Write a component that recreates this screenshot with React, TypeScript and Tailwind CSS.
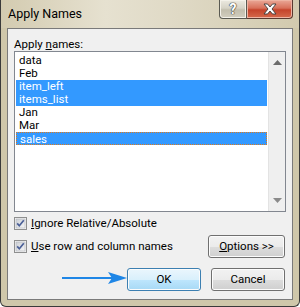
import React from "react";

const font = "font-['Roboto',sans-serif]";

const Check = () => (
  <svg width="13" height="13" viewBox="0 0 13 13" className="shrink-0">
    <defs>
      <linearGradient id="cbg" x1="0" y1="0" x2="1" y2="1">
        <stop offset="0" stopColor="#cbcfd5" />
        <stop offset="1" stopColor="#f6f6f6" />
      </linearGradient>
    </defs>
    <rect x="0.5" y="0.5" width="12" height="12" fill="#f4f4f4" stroke="#8e8f8f" />
    <rect x="2" y="2" width="9" height="9" fill="url(#cbg)" stroke="#aeb3b9" strokeWidth="0.6" />
    <path d="M3.2 6.4 L5.3 8.8 L9.8 3.2" fill="none" stroke="#4a5f97" strokeWidth="1.7" />
  </svg>
);

const Item = ({ label, sel, focus }: { label: string; sel?: boolean; focus?: boolean }) => (
  <div
    className={`h-[13px] leading-[13px] pl-[3px] text-[11.5px] whitespace-nowrap overflow-hidden ${
      sel ? "bg-[#3399ff] text-white" : "text-black"
    } ${focus ? "border border-dotted border-[#e07a1a] pl-[2px] leading-[11px]" : ""}`}
  >
    {label}
  </div>
);

const btn =
  "h-[23px] rounded-[3px] border text-[11.5px] leading-[21px] text-black text-center shadow-[inset_0_0_0_1px_#fcfcfc]";

export default function App() {
  return (
    <div className={`w-[300px] h-[307px] bg-white ${font} relative`}>
      <div className="w-full h-full flex flex-col border-x border-b border-[#3a3a3a] rounded-b-[6px] bg-[#cfc7aa]">
        {/* title bar */}
        <div className="h-[28px] flex items-start bg-[linear-gradient(90deg,#d3cbb0_0%,#e6e1d0_35%,#dfd9c5_60%,#d2caae_100%)]">
          <div className="pl-[7px] pt-[6px] text-[12.5px] leading-[16px] text-black">Apply Names</div>
          <div className="ml-auto mr-[6px] flex">
            <div className="w-[28px] h-[19px] border-x border-b border-[#5a5a52] rounded-bl-[4px] flex items-center justify-center bg-[linear-gradient(#eceae1_0%,#d6d3c6_45%,#c2bead_55%,#d2cebf_100%)] shadow-[inset_0_0_0_1px_#f4f2ea]">
              <span className="text-[14px] leading-[14px] font-bold text-white [text-shadow:0_0_1px_#333,0_0_1px_#333,0_0_1px_#333]">?</span>
            </div>
            <div className="w-[46px] h-[19px] border-r border-b border-[#5a3a30] rounded-br-[4px] flex items-center justify-center bg-[linear-gradient(#eaa897_0%,#d8705a_45%,#c5432b_55%,#d56a4c_100%)] shadow-[inset_0_0_0_1px_#eeb4a3]">
              <svg width="14" height="12" viewBox="0 0 14 12">
                <path
                  d="M1 1 H4.5 L7 4 L9.5 1 H13 L9 6 L13 11 H9.5 L7 8 L4.5 11 H1 L5 6 Z"
                  fill="#ffffff"
                  stroke="#3b3b3b"
                  strokeWidth="0.9"
                  strokeLinejoin="round"
                />
              </svg>
            </div>
          </div>
        </div>

        {/* client area */}
        <div className="flex-1 mx-[6px] mb-[6px] border border-[#7a7a7a] bg-[#f0f0f0] flex flex-col px-[6px]">
          <div className="pt-[8px] text-[11.5px] leading-[14px] text-black">
            Apply <u>n</u>ames:
          </div>
          <div className="h-[161px] border border-[#828790] bg-white flex">
            <div className="flex-1 px-[1px] pt-[2px]">
              <Item label="data" />
              <Item label="Feb" />
              <Item label="item_left" sel />
              <Item label="items_list" sel />
              <Item label="Jan" />
              <Item label="Mar" />
              <Item label="sales" sel focus />
            </div>
            <div className="w-[17px] bg-[#efefef] border-l border-[#e3e3e3] flex flex-col items-center justify-between py-[8px]">
              <svg width="9" height="5" viewBox="0 0 9 5">
                <path d="M4.5 0 L9 5 H0 Z" fill="#6b6b6b" />
              </svg>
              <svg width="9" height="5" viewBox="0 0 9 5">
                <path d="M0 0 H9 L4.5 5 Z" fill="#8a8a8a" />
              </svg>
            </div>
          </div>

          <div className="mt-[5px] h-[13px] flex items-center gap-[4px] text-[11.5px] leading-[13px] text-black">
            <Check />
            <span>
              <u>I</u>gnore Relative/Absolute
            </span>
          </div>

          <div className="mt-[5px] h-[22px] flex items-center gap-[4px] text-[11.5px] leading-[13px] text-black">
            <Check />
            <span>
              <u>U</u>se row and column names
            </span>
            <div
              className={`${btn} ml-auto mr-[1px] w-[77px] h-[22px] border-[#707070] bg-[linear-gradient(#f2f2f2_0%,#ebebeb_50%,#dddddd_51%,#cfcfcf_100%)]`}
            >
              <u>O</u>ptions &gt;&gt;
            </div>
          </div>

          <div className="mt-[11px] flex justify-end gap-[10px] mr-[1px]">
            <div
              className={`${btn} w-[74px] border-[#3c7fb1] bg-[linear-gradient(#eaf6fd_0%,#d9f0fc_50%,#bee6fd_51%,#a7d9f5_100%)]`}
            >
              OK
            </div>
            <div
              className={`${btn} w-[74px] border-[#707070] bg-[linear-gradient(#f2f2f2_0%,#ebebeb_50%,#dddddd_51%,#cfcfcf_100%)]`}
            >
              Cancel
            </div>
          </div>
        </div>
      </div>

      {/* annotation arrow */}
      <svg className="absolute left-[60px] top-[270px]" width="70" height="16" viewBox="0 0 70 16">
        <line x1="2" y1="8" x2="52" y2="8" stroke="#1f86e6" strokeWidth="2" />
        <path d="M48 2 L67 8 L48 14 L52 8 Z" fill="#1f86e6" />
      </svg>
    </div>
  );
}
